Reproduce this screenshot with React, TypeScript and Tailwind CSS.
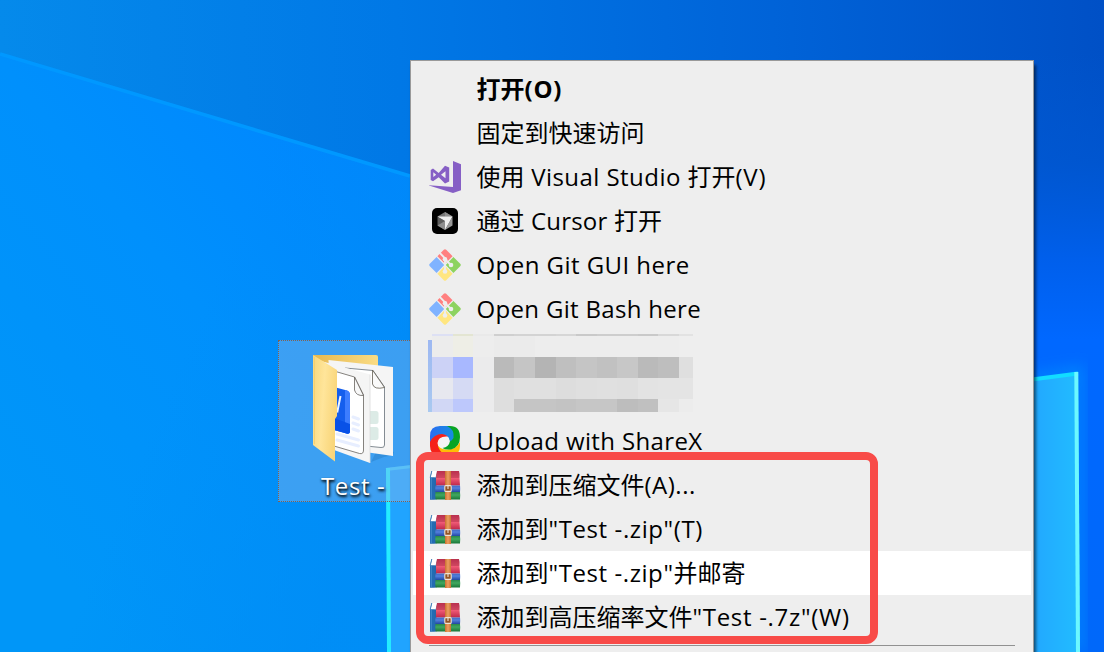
import type { ReactNode } from "react";

function Wallpaper() {
  return (
    <svg className="absolute inset-0" width="1104" height="652" viewBox="0 0 1104 652">
      <defs>
        <linearGradient id="sky" gradientUnits="userSpaceOnUse" x1="0" y1="30" x2="1104" y2="0">
          <stop offset="0" stopColor="#058aeb" />
          <stop offset="0.36" stopColor="#0078e6" />
          <stop offset="0.7" stopColor="#0063d8" />
          <stop offset="1" stopColor="#0050c6" />
        </linearGradient>
        <linearGradient id="skyGlow" x1="0" y1="0" x2="0" y2="1">
          <stop offset="0.08" stopColor="#0058d4" stopOpacity="0" />
          <stop offset="0.25" stopColor="#0058d4" stopOpacity="0.7" />
          <stop offset="0.4" stopColor="#0060ee" stopOpacity="0.95" />
          <stop offset="0.52" stopColor="#0068ff" stopOpacity="1" />
          <stop offset="1" stopColor="#0068fa" stopOpacity="1" />
        </linearGradient>
        <linearGradient id="beam" gradientUnits="userSpaceOnUse" x1="0" y1="500" x2="430" y2="150">
          <stop offset="0" stopColor="#0096f8" />
          <stop offset="0.5" stopColor="#0090fc" />
          <stop offset="1" stopColor="#0084ff" />
        </linearGradient>
        <linearGradient id="beamFoot" x1="0" y1="0" x2="1" y2="0.6">
          <stop offset="0.55" stopColor="#008cf4" stopOpacity="0" />
          <stop offset="1" stopColor="#008cf4" stopOpacity="0.7" />
        </linearGradient>
        <linearGradient id="pane" gradientUnits="userSpaceOnUse" x1="1034" y1="0" x2="1078" y2="0">
          <stop offset="0" stopColor="#22a8ff" />
          <stop offset="1" stopColor="#22bcff" />
        </linearGradient>
        <filter id="soft" x="-20%" y="-20%" width="140%" height="140%">
          <feGaussianBlur stdDeviation="7" />
        </filter>
      </defs>
      <rect width="1104" height="652" fill="url(#sky)" />
      <rect x="900" width="204" height="652" fill="url(#skyGlow)" />
      <path d="M0 54L410 176V652H0Z" fill="url(#beam)" />
      <path d="M0 54L410 176V652H0Z" fill="url(#beamFoot)" />
      <path d="M0 54L410 176" stroke="#0098ff" strokeWidth="3.5" />
      <path d="M1030 380L1078 372V652" fill="none" stroke="#0092ff" strokeOpacity="0.6" strokeWidth="12" filter="url(#soft)" />
      <path d="M1030 380L1078 372L1080 652H1030Z" fill="url(#pane)" />
      <path d="M1030 379.8L1078 373.5" stroke="#12dcff" strokeWidth="4" />
      <path d="M1076.3 372L1078 652" stroke="#6cf8ff" strokeWidth="4" />
      <path d="M386 468L412 465V652H388Z" fill="#20a4ff" />
      <path d="M386 469.5L412 466.5" stroke="#38c8ff" strokeWidth="3" />
      <path d="M388 468L389 652" stroke="#24ecff" strokeWidth="4" />
    </svg>
  );
}

function FolderIcon() {
  return (
    <svg className="absolute left-[33px] top-[13px]" width="84" height="112" viewBox="312 354 84 112">
      <defs>
        <linearGradient id="folderFront" x1="0" y1="0" x2="1" y2="0.3">
          <stop offset="0" stopColor="#f8d77c" />
          <stop offset="0.5" stopColor="#ffe59a" />
          <stop offset="1" stopColor="#f9d67b" />
        </linearGradient>
        <linearGradient id="folderBack" x1="0" y1="0" x2="1" y2="0">
          <stop offset="0" stopColor="#e6b850" />
          <stop offset="1" stopColor="#fadc84" />
        </linearGradient>
      </defs>
      <path d="M371 462L384 457L393 455L394 452L378 448Z" fill="#2577bd" opacity="0.4" />
      <path d="M313 355H376Q378 355 378 357V440H330Z" fill="url(#folderBack)" />
      <path d="M328.500 360L393 367V456L365 452L330 440Z" fill="#f5f5f5" />
      <path d="M345 368L373 370.500L384.500 387V445Q384.500 448 381 447.500L366 446L346 435Z" fill="#fff" stroke="#667078" strokeWidth="0.8" />
      <path d="M372.500 370V384Q374 390 384.500 387.500Z" fill="#fafafa" stroke="#615c50" strokeWidth="0.8" />
      <rect x="366" y="411" width="12.500" height="13" rx="2.500" fill="#dcebe6" />
      <rect x="366" y="427" width="12.500" height="13" rx="2.500" fill="#dcebe6" />
      <path d="M321 361L370 374.500V463L334 450Z" fill="#f5f5f5" />
      <path d="M370 374.500V463" stroke="#dadada" strokeWidth="0.8" />
      <path d="M334 371L354.500 377L363.500 395V450Q363.500 454.500 359.500 453.500L334 446Z" fill="#fff" stroke="#67635e" strokeWidth="0.8" />
      <path d="M354.500 377V390Q356 396 363.500 395.500Z" fill="#f8f8f8" stroke="#67635e" strokeWidth="0.8" />
      <path d="M334 387L347 390.500Q350 391.500 350 395V431Q350 434.500 346.500 433.500L334 430Z" fill="#145eed" />
      <path d="M345 390L347 390.500Q350 391.500 350 395V431Q350 434 347 433.500L345 433Z" fill="#3d7dff" />
      <path d="M334 418L350 424V431Q350 434.500 346.500 433.500L334 430Z" fill="#0951e7" />
      <path d="M340.500 396L337.500 411L335 408" fill="none" stroke="#edf4ff" strokeWidth="2" />
      <path d="M353 417L358.500 419M353 423L358.500 425M353 429L358.500 431M337 434L358.500 440M337 440L358.500 446" stroke="#e7eeff" strokeWidth="3" strokeLinecap="round" />
      <path d="M313 355L337 370V416L335 419V461.500L313 445Z" fill="url(#folderFront)" />
      <path d="M314.500 357V444" stroke="#f3cd6c" strokeWidth="0.8" />
    </svg>
  );
}

function VisualStudioIcon() {
  return (
    <svg width="32" height="32" viewBox="0 0 32 32">
      <path fill="#865fc5" d="M24 0L32 3.300V29.200L24 32L0 24.600V24.200L24 26Z" />
      <path fill="#865fc5" fillRule="evenodd" d="M1.700 9L4 7.500L9.700 12L16 4.800L20.200 6.600V20.400L16 22.400L9.700 16.200L4 20.200L1.700 19ZM4.300 11.200V16L7.200 13.700ZM16.500 10.200L12 13.700L16.500 17.200Z" />
    </svg>
  );
}

function CursorIcon() {
  return (
    <svg width="32" height="32" viewBox="0 0 32 32">
      <rect x="3" y="3" width="26" height="26" rx="5" fill="#000" />
      <path d="M16 7L23.500 11.500L16 15.500L8.500 11.500Z" fill="#777" />
      <path d="M16 7L23.500 11.500H16Z" fill="#8f8f8f" />
      <path d="M8.500 11.500L16 16V25L8.500 20.500Z" fill="#5e5e5e" />
      <path d="M8.500 20.500L16 16V25Z" fill="#909090" />
      <path d="M23.500 11.500V20.500L16 25Z" fill="#999" />
      <path d="M8.500 11.500H23.500L16 25V16Z" fill="#f0f0f0" />
    </svg>
  );
}

function GitIcon() {
  return (
    <svg width="32" height="32" viewBox="0 0 32 32">
      <path d="M14.800 .8Q16 -.4 17.200 .8L23.600 7.200L16 14.800L8.400 7.200Z" fill="#ff8080" />
      <path d="M7.600 8L15.200 16L7.600 24L.8 17.200Q-.4 16 .8 14.800Z" fill="#80b3ff" />
      <path d="M24.400 8L31.200 14.800Q32.400 16 31.200 17.200L24.400 24L16.800 16Z" fill="#8dd35f" />
      <path d="M16 16.800L23.600 24.800L17.200 31.200Q16 32.400 14.800 31.200L8.400 24.800Z" fill="#ffe680" />
      <path d="M10.500 3.700L16 9.300V23M16 10.300L22 16" fill="none" stroke="#eee" strokeWidth="1.900" />
      <circle cx="16" cy="10.300" r="2.300" fill="#eee" />
      <circle cx="22" cy="16" r="2.300" fill="#eee" />
      <circle cx="16" cy="22.500" r="2.300" fill="#eee" />
    </svg>
  );
}

function ShareXIcon() {
  return (
    <svg width="32" height="32" viewBox="0 0 32 32">
      <defs>
        <linearGradient id="sxBlue" x1="0" y1="0" x2="1" y2="0">
          <stop offset="0" stopColor="#2b6df2" />
          <stop offset="1" stopColor="#168de0" />
        </linearGradient>
      </defs>
      <circle cx="15" cy="17" r="8" fill="#f4f4f4" />
      <path d="M7.500 18Q10 24 17 24.500Q27 25 31 17V21Q31 31 21 31H16Q9 28 7.500 18Z" fill="#ffbd05" />
      <path d="M18 1H21Q31 1 31 12Q31 22 22 24.500Q16 25 13.500 23Q20 22 21 16Q21 12 18 8Z" fill="#08a424" />
      <path d="M1 16Q4 8.500 12 8.500Q17 8.500 19.500 11.500Q9 10.500 8.500 18Q9 26 17 31H11Q1 31 1 21Z" fill="#f5221a" />
      <path d="M1 17V11Q1 1 11 1H18Q25.500 4 24.500 13Q22 17 21 16Q20 10 13 9Q5 9 1 17Z" fill="url(#sxBlue)" />
    </svg>
  );
}

function WinRarIcon() {
  return (
    <svg width="32" height="32" viewBox="0 0 32 32">
      <defs>
        <linearGradient id="rarRed" x1="0" y1="0" x2="0" y2="1">
          <stop offset="0" stopColor="#b9304e" />
          <stop offset="0.46" stopColor="#cf4660" />
          <stop offset="0.5" stopColor="#f05a76" />
          <stop offset="1" stopColor="#be284b" />
        </linearGradient>
        <linearGradient id="rarBlue" x1="0" y1="0" x2="0" y2="1">
          <stop offset="0" stopColor="#4068c4" />
          <stop offset="0.4" stopColor="#527fdd" />
          <stop offset="1" stopColor="#2347a2" />
        </linearGradient>
        <linearGradient id="rarGreen" x1="0" y1="0" x2="0" y2="1">
          <stop offset="0" stopColor="#2a874a" />
          <stop offset="0.4" stopColor="#40a860" />
          <stop offset="1" stopColor="#1a7638" />
        </linearGradient>
        <linearGradient id="rarBelt" x1="0" y1="0" x2="1" y2="0">
          <stop offset="0" stopColor="#c9712f" />
          <stop offset="0.5" stopColor="#ed9f62" />
          <stop offset="1" stopColor="#cb7434" />
        </linearGradient>
      </defs>
      <path d="M2.500 2H8.500L7.500 9V30.500H1V9Z" fill="#2767a8" />
      <path d="M3 2H8.800L6.500 8.500H1.500Z" fill="#fff" />
      <path d="M1.200 8.500L2.800 2" stroke="#4a86bf" strokeWidth="1" />
      <path d="M1 8.500H5.800V30.500H1Z" fill="#246cb2" />
      <path d="M2.300 9V30" stroke="#4c94d2" strokeWidth="0.8" />
      <path d="M8 2H30Q31 5 30.500 9L31 16.500H7V9Q7 5 8 2Z" fill="url(#rarRed)" />
      <path d="M6.500 16.500H31Q31.500 19 31 23H6.500Q6 19 6.500 16.500Z" fill="url(#rarBlue)" />
      <path d="M6.500 23H31Q31.500 26 31 30.500H6.500Q6 26 6.500 23Z" fill="url(#rarGreen)" />
      <path d="M16 2H22V31H16Z" fill="url(#rarBelt)" />
      <rect x="15.800" y="16.600" width="6.400" height="5.800" rx="1" fill="#945425" stroke="#eee3d5" strokeWidth="1.100" />
      <path d="M19 16.500V20" stroke="#eee3d5" strokeWidth="1.100" />
    </svg>
  );
}

const mosaicCells: string[][] = [
  ["#dde0f4", "#e3e5d2", "#e9e9e9", "#cfcfcf", "#d3d3d3", "#d3d3d3", "#d6d6d6", "#c9c9c9", "#cdcdcd", "#cdcdcd", "#c9c9c9", "#d8d8d8", "#e2e2e2"],
  ["#ececec", "#eeeee6", "#ededed", "#ebebeb", "#ebebeb", "#ededed", "#ededed", "#ededed", "#ededed", "#ededed", "#ededed", "#ededed", "#eeeeee"],
  ["#ccd2f6", "#a8b8ff", "#ebebec", "#bababa", "#c5c5c5", "#b4b4b4", "#bfbfbf", "#c5c5c5", "#c1c1c1", "#c7c7c7", "#bababa", "#bebebe", "#dfdfdf"],
  ["#e7e8ef", "#d5daf4", "#ebebec", "#dedede", "#e0e0e0", "#e0e0e0", "#dddddd", "#dfdfdf", "#e0e0e0", "#dfdfdf", "#e3e3e3", "#e4e4e4", "#e4e4e4"],
  ["#d1d7f5", "#bdc8fc", "#ebebec", "#dedede", "#c5c5c5", "#c5c5c5", "#c3c3c3", "#c6c6c6", "#c6c6c6", "#bdbdbd", "#c0c0c0", "#e6e6e6", "#ececec"],
];

function Mosaic() {
  return (
    <div className="flex h-[88px] pl-[17px] pt-[3px]">
      <div className="mt-[6px] h-[72px] w-[4px] bg-gradient-to-b from-[#9db8f2] to-[#a9c9f0]" />
      <div className="grid h-[78px] w-[262px] grid-cols-[21px_20px_21px_20px_21px_21px_20px_21px_20px_21px_20px_21px_14px] grid-rows-[2px_21px_21px_21px_13px]">
        {mosaicCells.flatMap((row, r) =>
          row.map((color, c) => <div key={`${r}-${c}`} style={{ backgroundColor: color }} />),
        )}
      </div>
    </div>
  );
}

function Latin({ children, className = "tracking-[0.4px]" }: { children: ReactNode; className?: string }) {
  return <span className={`font-['Open_Sans'] text-[24px] ${className}`}>{children}</span>;
}

function MenuItem({ icon, children, active = false, bold = false }: { icon?: ReactNode; children: ReactNode; active?: boolean; bold?: boolean }) {
  return (
    <div className={`mr-[2px] ml-[2px] flex h-[44px] shrink-0 items-center pl-[16px] ${active ? "bg-white" : ""}`}>
      <div className="mr-[15.5px] h-8 w-8 shrink-0">{icon}</div>
      <div className={`mb-[2px] whitespace-pre leading-[42px] ${bold ? "font-bold" : ""}`}>{children}</div>
    </div>
  );
}

export default function App() {
  return (
    <main className="relative h-[652px] w-[1104px] overflow-hidden font-['Noto_Sans_CJK_SC',sans-serif] text-[24px] text-black">
      <Wallpaper />

      <div className="absolute left-[278px] top-[340px] h-[162px] w-[150px] border border-dotted border-[#82604f] bg-[#86b6ea]/45">
        <FolderIcon />
        <div className="absolute left-[42px] top-[127px] whitespace-pre font-['Open_Sans'] text-[24px] leading-9 tracking-[0.6px] text-white [text-shadow:1px_2px_3px_#000,0_1px_2px_#0008]">Test -</div>
      </div>

      <div className="absolute left-[410px] top-[60px] flex h-[620px] w-[624px] flex-col border border-[#999] bg-[#eee] pt-[6px] shadow-[2px_5px_3px_rgba(0,0,0,0.55)]">
        <MenuItem bold>打开<Latin className="tracking-[0.8px]">(O)</Latin></MenuItem>
        <MenuItem>固定到快速访问</MenuItem>
        <MenuItem icon={<VisualStudioIcon />}>使用<Latin className="tracking-[0.45px]"> Visual Studio </Latin>打开<Latin className="tracking-[0.8px]">(V)</Latin></MenuItem>
        <MenuItem icon={<CursorIcon />}>通过<Latin className="tracking-[0.2px]"> Cursor </Latin>打开</MenuItem>
        <MenuItem icon={<GitIcon />}><Latin className="tracking-[0.45px]">Open Git GUI here</Latin></MenuItem>
        <MenuItem icon={<GitIcon />}><Latin className="tracking-[0.32px]">Open Git Bash here</Latin></MenuItem>
        <Mosaic />
        <MenuItem icon={<ShareXIcon />}><Latin className="tracking-[0.36px]">Upload with ShareX</Latin></MenuItem>
        <MenuItem icon={<WinRarIcon />}>添加到压缩文件<Latin className="tracking-[0.5px]">(A)...</Latin></MenuItem>
        <MenuItem icon={<WinRarIcon />}>添加到<Latin className="tracking-[0.6px]">"Test -.zip"(T)</Latin></MenuItem>
        <MenuItem icon={<WinRarIcon />} active>添加到<Latin className="tracking-[0.58px]">"Test -.zip"</Latin>并邮寄</MenuItem>
        <MenuItem icon={<WinRarIcon />}>添加到高压缩率文件<Latin className="tracking-[0.7px]">"Test -.7z"(W)</Latin></MenuItem>
        <div className="mx-[18px] mt-[6px] h-px shrink-0 bg-[#919191]" />
      </div>

      <div className="absolute left-[416px] top-[452px] h-[192px] w-[462px] rounded-[12px] border-[8px] border-[#f84b48]" />
    </main>
  );
}
